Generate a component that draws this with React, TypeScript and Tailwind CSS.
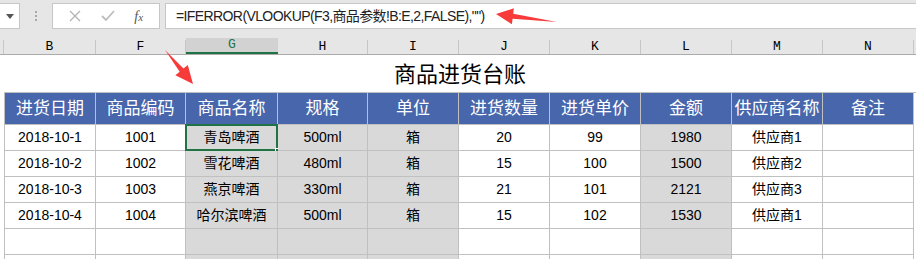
const cols = [
  { key: 'B', w: 'w-[92px]', gray: false },
  { key: 'F', w: 'w-[90px]', gray: false },
  { key: 'G', w: 'w-[92px]', gray: true },
  { key: 'H', w: 'w-[90px]', gray: true },
  { key: 'I', w: 'w-[91px]', gray: true },
  { key: 'J', w: 'w-[91px]', gray: false },
  { key: 'K', w: 'w-[91px]', gray: false },
  { key: 'L', w: 'w-[91px]', gray: true },
  { key: 'M', w: 'w-[91px]', gray: false },
  { key: 'N', w: 'w-[91px]', gray: false },
]

const heads = ['进货日期', '商品编码', '商品名称', '规格', '单位', '进货数量', '进货单价', '金额', '供应商名称', '备注']

const rows = [
  ['2018-10-1', '1001', '青岛啤酒', '500ml', '箱', '20', '99', '1980', '供应商1', ''],
  ['2018-10-2', '1002', '雪花啤酒', '480ml', '箱', '15', '100', '1500', '供应商2', ''],
  ['2018-10-3', '1003', '燕京啤酒', '330ml', '箱', '21', '101', '2121', '供应商3', ''],
  ['2018-10-4', '1004', '哈尔滨啤酒', '500ml', '箱', '15', '102', '1530', '供应商1', ''],
  ['', '', '', '', '', '', '', '', '', ''],
  ['', '', '', '', '', '', '', '', '', ''],
]

const font = { fontFamily: '"Liberation Sans", "Noto Sans CJK SC", sans-serif' }

export default function App() {
  return (
    <div className="relative w-[916px] h-[259px] overflow-hidden bg-white" style={font}>
      {/* formula bar */}
      <div className="h-[38px] bg-[#e6e6e6] pt-[3px]">
        <div className="flex h-[26px] items-stretch">
          <div className="w-[20px] bg-white border border-l-0 border-[#c6c6c6] flex items-center justify-center">
            <svg width="8" height="5" viewBox="0 0 8 5"><path d="M0 0h8L4 5z" fill="#555" /></svg>
          </div>
          <div className="w-[32px] flex flex-col items-center justify-center gap-[2px]">
            <span className="w-[2px] h-[2px] bg-[#a8a8a8]" />
            <span className="w-[2px] h-[2px] bg-[#a8a8a8]" />
            <span className="w-[2px] h-[2px] bg-[#a8a8a8]" />
          </div>
          <div className="w-[108px] bg-white border border-[#c6c6c6] flex items-center justify-around px-[6px]">
            <svg width="12" height="12" viewBox="0 0 12 12"><path d="M1 1l10 10M11 1L1 11" stroke="#b3b3b3" strokeWidth="1.3" /></svg>
            <svg width="14" height="12" viewBox="0 0 14 12"><path d="M1 6l4 4 8-9" stroke="#bdbdbd" strokeWidth="1.8" fill="none" /></svg>
            <span className="text-[14px] italic text-[#555]" style={{ fontFamily: '"Liberation Serif", serif' }}>f<span className="text-[11px]">x</span></span>
          </div>
          <div className="ml-[5px] flex-1 bg-white border border-r-0 border-[#c6c6c6] flex items-center pl-[10px] text-[14px] tracking-[-0.6px] text-[#222]">
            =IFERROR(VLOOKUP(F3,商品参数!B:E,2,FALSE),"")
          </div>
        </div>
      </div>

      {/* column headers */}
      <div className="flex h-[17px] bg-[#e6e6e6] border-b border-[#ababab] text-[13px]" style={{ fontFamily: '"Liberation Mono", monospace' }}>
        <div className="w-[4px] border-r border-[#c6c6c6] mt-[2px]" />
        {cols.map((c) => (
          <div
            key={c.key}
            className={`${c.w} flex items-center justify-center ${c.key === 'G' ? 'bg-[#d2d2d2] text-[#217346] border-b-2 border-[#217346]' : 'border-r border-[#c6c6c6] mt-[2px] text-black'}`}
          >
            {c.key}
          </div>
        ))}
      </div>

      {/* title */}
      <div className="h-[37px] flex items-center justify-center pl-[4px] text-[22px] text-black pt-[2px]">商品进货台账</div>

      {/* table */}
      <div className="ml-[4px] border-t border-[#c0c0c0]">
        <div className="flex h-[32px]">
          {cols.map((c, i) => (
            <div
              key={c.key}
              className={`${c.w} bg-[#4766ac] text-white text-[17px] flex items-center justify-center border-r border-b border-[#c0c0c0] ${i === 0 ? 'border-l' : ''}`}
            >
              {heads[i]}
            </div>
          ))}
        </div>
        {rows.map((r, ri) => (
          <div key={ri} className="flex h-[26px]">
            {cols.map((c, i) => (
              <div
                key={c.key}
                className={`${c.w} relative ${c.gray ? 'bg-[#d9d9d9]' : 'bg-white'} text-[14px] text-black flex items-center justify-center border-r border-b border-[#c0c0c0] ${i === 0 ? 'border-l' : ''}`}
              >
                {r[i]}
                {ri === 0 && c.key === 'G' && (
                  <>
                    <div className="absolute -left-px -top-px -right-px -bottom-px border-2 border-[#217346]" />
                    <div className="absolute -right-[4px] -bottom-[4px] w-[6px] h-[6px] bg-[#217346] border border-white" />
                  </>
                )}
              </div>
            ))}
          </div>
        ))}
      </div>

      {/* red arrows */}
      <svg className="absolute left-0 top-0 pointer-events-none" width="916" height="259">
        <polygon points="165,50 183.5,68.5 187.8,65 193,84 175.4,75.2 179.7,71.7" fill="#f73b3b" />
        <polygon points="557,22 513.2,13.7 513.9,8.3 496,14 511.9,24.2 512.6,18.7" fill="#f73b3b" />
      </svg>
    </div>
  )
}
